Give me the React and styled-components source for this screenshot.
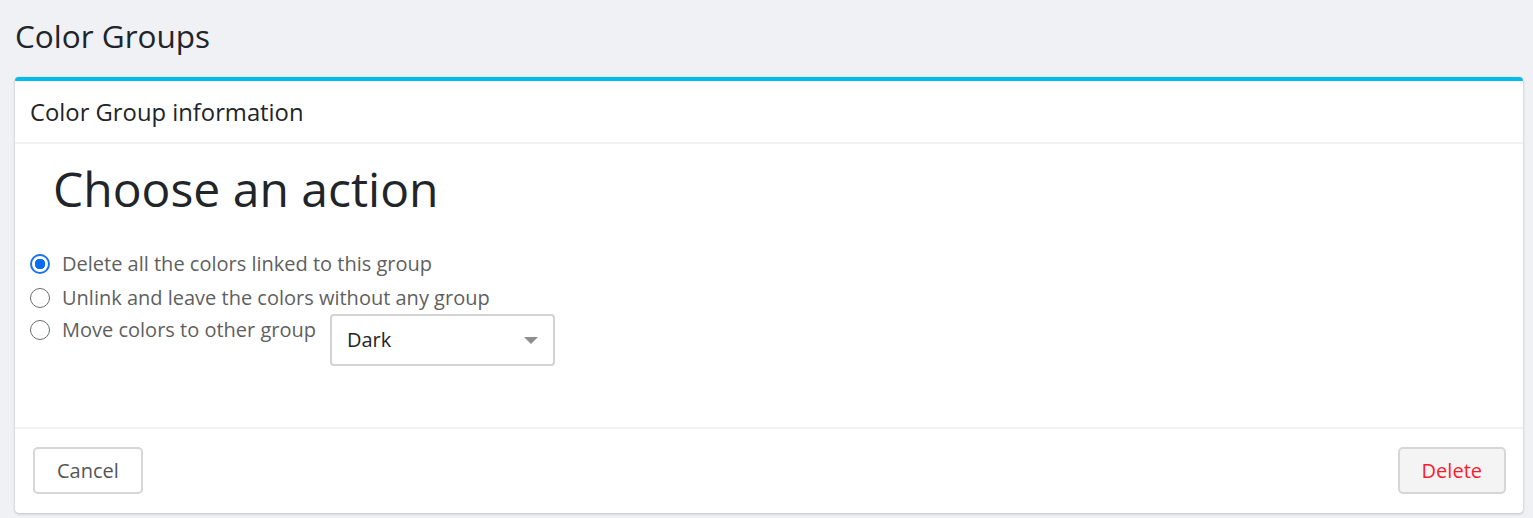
import React, { useState } from "react";
import styled, { createGlobalStyle } from "styled-components";

const GlobalStyle = createGlobalStyle`
  html, body {
    margin: 0;
    padding: 0;
    background: #f0f1f5;
    font-family: "Open Sans", "Liberation Sans", sans-serif;
    color: #212529;
  }
  * { box-sizing: border-box; }
`;

const Page = styled.div`
  padding: 14px 10px 4px 15px;
`;

const PageTitle = styled.h1`
  margin: 0 0 19px;
  font-size: 31.5px;
  font-weight: 400;
  line-height: 44px;
  color: #212529;
`;

const Card = styled.div`
  background: #fff;
  border-top: 4px solid #00bcea;
  border-radius: 4px;
  box-shadow: 0 0 1px rgba(0, 0, 0, 0.15), 0 1px 3px rgba(0, 0, 0, 0.2);
`;

const CardHeader = styled.div`
  padding: 16px 15px 15px;
  border-bottom: 2px solid #f2f2f4;
  font-size: 23.8px;
  line-height: 30px;
  color: #212529;
`;

const CardBody = styled.div`
  padding: 13px 15px 61px;
`;

const Heading = styled.h2`
  margin: 0 0 27px 23px;
  font-size: 48px;
  font-weight: 400;
  line-height: 64px;
  color: #212529;
`;

const Options = styled.div`
  display: flex;
  flex-direction: column;
`;

const Option = styled.label`
  display: flex;
  align-items: flex-start;
  gap: 12px;
  font-size: 20px;
  line-height: 32px;
  color: #5f5f5f;
  cursor: pointer;
  min-height: ${(p) => p.$rowHeight || 32}px;
`;

const Radio = styled.input.attrs({ type: "radio" })`
  appearance: none;
  margin: 6px 0 0;
  width: 20px;
  height: 20px;
  border-radius: 50%;
  border: 1px solid #6e6e6e;
  background: #fff;
  flex-shrink: 0;
  &:checked {
    border-color: #1a73e8;
    background: radial-gradient(circle, #0a6cf0 0 5px, #fff 5.5px);
    border-width: 2px;
  }
`;

const SelectBox = styled.div`
  position: relative;
  margin: 0 0 0 2px;
  width: 225px;
  height: 52px;
  border: 2px solid #d3d3d3;
  border-radius: 4px;
  display: flex;
  align-items: center;
  padding: 0 15px;
  font-size: 20px;
  color: #212529;
  &::after {
    content: "";
    position: absolute;
    right: 15px;
    top: 21px;
    border-left: 7px solid transparent;
    border-right: 7px solid transparent;
    border-top: 7px solid #8f8f8f;
  }
`;

const CardFooter = styled.div`
  display: flex;
  justify-content: space-between;
  padding: 18px 17px 19px 18px;
  border-top: 2px solid #f2f2f4;
`;

const Button = styled.button`
  height: 47px;
  padding: 0 22px;
  font-family: inherit;
  font-size: 20px;
  border: 2px solid #d6d6d6;
  border-radius: 5px;
  background: ${(p) => (p.$danger ? "#f4f4f5" : "#fff")};
  color: ${(p) => (p.$danger ? "#ff1a2b" : "#555")};
  cursor: pointer;
`;

export default function App() {
  const [choice, setChoice] = useState("delete");
  return (
    <>
      <GlobalStyle />
      <Page>
        <PageTitle>Color Groups</PageTitle>
        <Card>
          <CardHeader>Color Group information</CardHeader>
          <CardBody>
            <Heading>Choose an action</Heading>
            <Options>
              <Option $rowHeight={34}>
                <Radio name="action" checked={choice === "delete"} onChange={() => setChoice("delete")} />
                Delete all the colors linked to this group
              </Option>
              <Option>
                <Radio name="action" checked={choice === "unlink"} onChange={() => setChoice("unlink")} />
                Unlink and leave the colors without any group
              </Option>
              <Option>
                <Radio name="action" checked={choice === "move"} onChange={() => setChoice("move")} />
                Move colors to other group
                <SelectBox>Dark</SelectBox>
              </Option>
            </Options>
          </CardBody>
          <CardFooter>
            <Button>Cancel</Button>
            <Button $danger>Delete</Button>
          </CardFooter>
        </Card>
      </Page>
    </>
  );
}
